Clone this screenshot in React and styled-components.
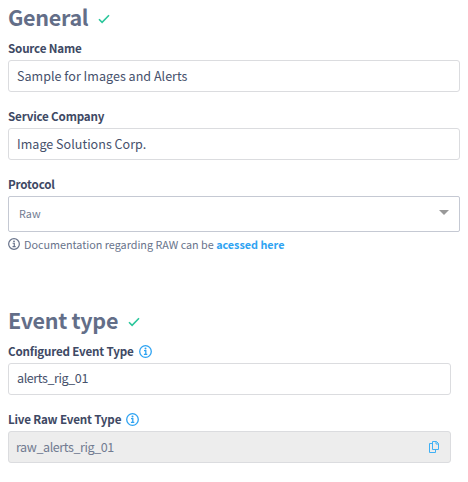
import React from "react";
import styled, { createGlobalStyle } from "styled-components";

const GlobalStyle = createGlobalStyle`
  * { box-sizing: border-box; }
  body {
    margin: 0;
    background: #fff;
    color: #3e4964;
    font-family: "Source Sans Pro", "Noto Sans CJK SC", sans-serif;
    font-size: 12.54px;
  }
`;

const Form = styled.main`
  width: 468px;
  height: 482px;
  padding: 0 8px;
  overflow: hidden;
`;

const Section = styled.section`
  width: ${(p) => p.$width}px;
  margin-top: ${(p) => p.$top || 0}px;
`;

const Heading = styled.h2`
  display: flex;
  align-items: center;
  gap: 10px;
  height: 36px;
  margin: 0;
  color: #636e88;
  font-size: 21.5px;
  font-weight: 700;
  line-height: 34px;
  letter-spacing: -0.3px;
  white-space: nowrap;
`;

const HeadingText = styled.span`
  height: 36px;
`;

const Field = styled.div`
  & + & { margin-top: 12px; }
`;

const Label = styled.label`
  display: flex;
  align-items: center;
  gap: 5px;
  height: 24px;
  font-size: 11.64px;
  font-weight: 700;
  line-height: 24px;
  letter-spacing: -0.19px;
`;

const Input = styled.div`
  display: flex;
  align-items: center;
  justify-content: space-between;
  height: 32px;
  padding: 0 11px ${(p) => p.$lift || 0}px ${(p) => (p.$disabled ? 7 : 8)}px;
  border: 1px solid #dbdcdf;
  border-radius: 3px;
  background: ${(p) => (p.$disabled ? "#ededed" : "#fff")};
  color: ${(p) => (p.$disabled ? "#717b91" : "#46516c")};
  line-height: 30px;
  letter-spacing: ${(p) => p.$spacing ?? 0.02}px;
`;

const Select = styled.div`
  display: flex;
  align-items: center;
  justify-content: space-between;
  height: 36px;
  padding: 0 10px 2px;
  border: 1px solid #c5c9d3;
  border-radius: 2px;
  color: #717b91;
  font-size: 10.8px;
  line-height: 32px;
`;

const Help = styled.p`
  display: flex;
  align-items: center;
  height: 24px;
  margin: 0;
  color: #68738b;
  font-size: 10.8px;
  line-height: 24px;
  white-space: pre;
`;

const HelpText = styled.span`
  margin-left: 4px;
  letter-spacing: -0.01px;
`;

const Link = styled.a`
  color: #2ea3f2;
  font-weight: 700;
`;

const Icon = styled.svg`
  display: block;
  flex: none;
  fill: none;
`;

const CheckIcon = styled(Icon)`
  margin-top: 2px;
`;

const CaretIcon = styled(Icon)`
  margin-bottom: 2px;
`;

const Check = () => (
  <CheckIcon width="12" height="10" viewBox="0 0 12 10">
    <path d="M1 5.2 4.1 8.3 11 1.2" stroke="#2ac69b" strokeWidth="1.6" />
  </CheckIcon>
);

const Info = ({ size, color }) => (
  <Icon width={size} height={size} viewBox="0 0 13 13">
    <circle cx="6.5" cy="6.5" r="5.8" stroke={color} strokeWidth="1.3" />
    <path d="M5 5.7h1.8v3.6M4.9 9.4h3.4" stroke={color} strokeWidth="1.3" />
    <circle cx="6.5" cy="3.6" r="1" fill={color} />
  </Icon>
);

const Caret = () => (
  <CaretIcon width="10" height="5" viewBox="0 0 10 5">
    <path d="M0 0h10L5 5z" fill="#999" />
  </CaretIcon>
);

const Copy = () => (
  <Icon width="10" height="12" viewBox="0 0 10 12">
    <path d="M3.5.5h4l2 2v6h-6zM7 .5v2.5h2.5M3.5 2.5h-3v9h6V8.7" stroke="#3fb0f5" />
  </Icon>
);

export default function App() {
  return (
    <>
      <GlobalStyle />
      <Form>
        <Section $width={452}>
          <Heading><HeadingText>General</HeadingText><Check /></Heading>
          <Field>
            <Label>Source Name</Label>
            <Input>Sample for Images and Alerts</Input>
          </Field>
          <Field>
            <Label>Service Company</Label>
            <Input>Image Solutions Corp.</Input>
          </Field>
          <Field>
            <Label>Protocol</Label>
            <Select>Raw<Caret /></Select>
            <Help>
              <Info size={12} color="#68738b" />
              <HelpText>Documentation regarding RAW can be <Link>acessed here</Link></HelpText>
            </Help>
          </Field>
        </Section>
        <Section $width={443} $top={47}>
          <Heading><HeadingText>Event type</HeadingText><Check /></Heading>
          <Field>
            <Label>Configured Event Type<Info size={13} color="#2ea3f2" /></Label>
            <Input $spacing={-0.4} $lift={2}>alerts_rig_01</Input>
          </Field>
          <Field>
            <Label>Live Raw Event Type<Info size={13} color="#2ea3f2" /></Label>
            <Input $disabled $spacing={-0.41}>raw_alerts_rig_01<Copy /></Input>
          </Field>
        </Section>
      </Form>
    </>
  );
}
